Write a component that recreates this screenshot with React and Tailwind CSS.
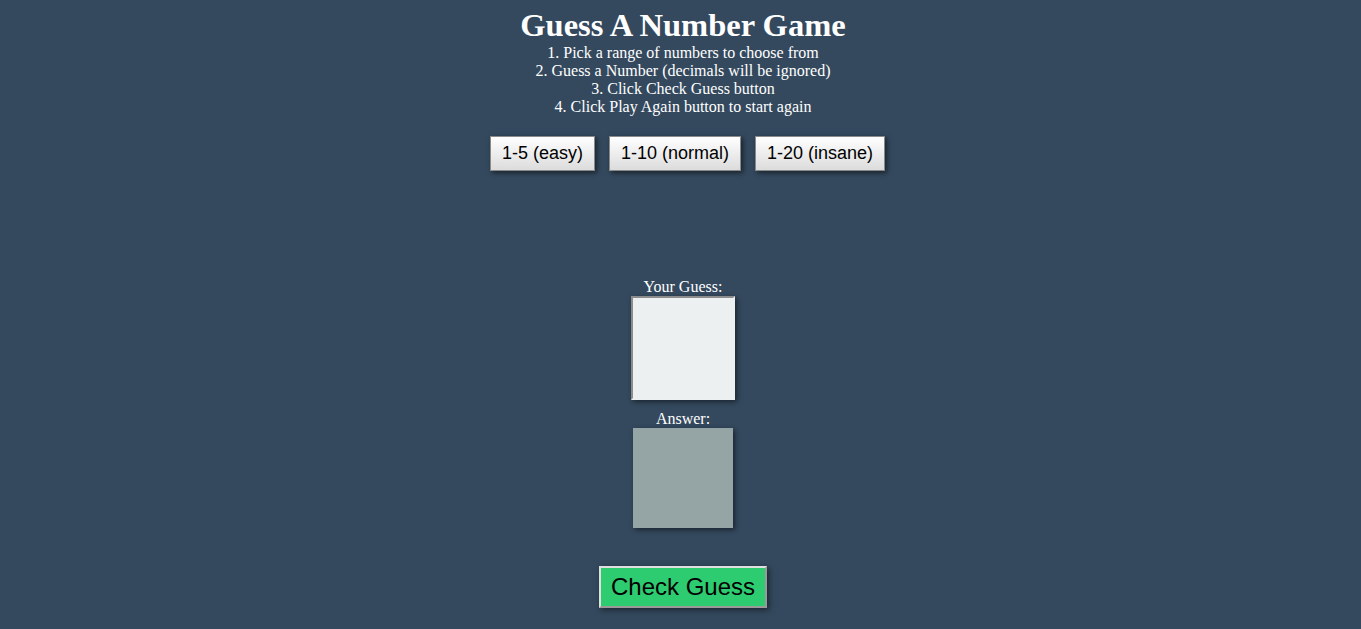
import { useState } from 'react';

const RANGES = ['1-5 (easy)', '1-10 (normal)', '1-20 (insane)'];

export default function App() {
  const [guess, setGuess] = useState('');

  return (
    <main className="min-h-screen bg-[#34495e] text-white font-['Liberation_Serif',serif]">
      <div className="flex flex-col items-center pl-[5px] pt-[7px]">
        <h1 className="text-[32.5px] font-bold leading-[37px]">Guess A Number Game</h1>
        <div className="text-center text-[16px] leading-[18px]">
          <p>1. Pick a range of numbers to choose from</p>
          <p>2. Guess a Number (decimals will be ignored)</p>
          <p>3. Click Check Guess button</p>
          <p>4. Click Play Again button to start again</p>
        </div>

        <div className="ml-[9px] mt-[20px] flex gap-[14px]">
          {RANGES.map((r) => (
            <button
              key={r}
              className="border border-[#8a8a8a] bg-gradient-to-b from-white to-[#dcdcdc] px-[11px] py-[6px] font-['Liberation_Sans',sans-serif] text-[18px] leading-[21px] text-black shadow-[2px_2px_5px_rgba(0,0,0,0.55)]"
            >
              {r}
            </button>
          ))}
        </div>

        <div className="h-[107px]" />

        <label className="text-[16px] leading-[18px]">Your Guess:</label>
        <input
          value={guess}
          onChange={(e) => setGuess(e.target.value)}
          className="h-[104px] w-[104px] border-2 border-t-[#8c8c8c] border-l-[#8c8c8c] border-b-[#ecf0f1] border-r-[#ecf0f1] bg-[#ecf0f1] text-center text-[48px] text-black shadow-[2px_2px_5px_rgba(0,0,0,0.5)] outline-none"
        />

        <p className="mt-[10px] text-[16px] leading-[18px]">Answer:</p>
        <div className="h-[100px] w-[100px] bg-[#95a5a6] shadow-[2px_2px_5px_rgba(0,0,0,0.5)]" />

        <button className="mt-[38px] border-2 border-t-[#e0e0e0] border-l-[#e0e0e0] border-b-[#9a9a9a] border-r-[#9a9a9a] bg-[#2ecc71] px-[10px] py-[5px] font-['Liberation_Sans',sans-serif] text-[24px] leading-[28px] text-black shadow-[2px_2px_6px_rgba(0,0,0,0.5)]">
          Check Guess
        </button>
      </div>
    </main>
  );
}
